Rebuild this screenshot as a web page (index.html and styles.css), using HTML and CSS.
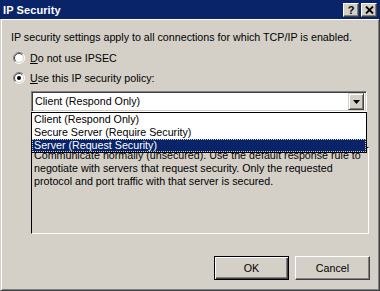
FILE: index.html
```html
<!DOCTYPE html>
<html>
<head>
<meta charset="utf-8">
<link rel="stylesheet" href="styles.css">
</head>
<body>
<div class="window">
  <div class="titlebar">
    <span class="title">IP Security</span>
    <div class="caption-btns">
      <span class="cbtn help">?</span>
      <span class="cbtn close"><svg width="9" height="8" viewBox="0 0 9 8"><path d="M1 0.5 L8 7.5 M8 0.5 L1 7.5" stroke="#000" stroke-width="1.8" fill="none"/></svg></span>
    </div>
  </div>
  <div class="body">
    <p class="intro">IP security settings apply to all connections for which TCP/IP is enabled.</p>
    <div class="radio">
      <svg class="radio-icon" width="12" height="12" viewBox="0 0 12 12">
        <circle cx="6" cy="6" r="5" fill="#fff"/>
        <path d="M2.1 9.9 A5.5 5.5 0 0 1 9.9 2.1" stroke="#808080" fill="none"/>
        <path d="M2.8 9.2 A4.5 4.5 0 0 1 9.2 2.8" stroke="#404040" fill="none"/>
        <path d="M9.9 2.1 A5.5 5.5 0 0 1 2.1 9.9" stroke="#fff" fill="none"/>
        <path d="M9.2 2.8 A4.5 4.5 0 0 1 2.8 9.2" stroke="#d4d0c8" fill="none"/>
      </svg>
      <span><u>D</u>o not use IPSEC</span>
    </div>
    <div class="radio">
      <svg class="radio-icon" width="12" height="12" viewBox="0 0 12 12">
        <circle cx="6" cy="6" r="5" fill="#fff"/>
        <path d="M2.1 9.9 A5.5 5.5 0 0 1 9.9 2.1" stroke="#808080" fill="none"/>
        <path d="M2.8 9.2 A4.5 4.5 0 0 1 9.2 2.8" stroke="#404040" fill="none"/>
        <path d="M9.9 2.1 A5.5 5.5 0 0 1 2.1 9.9" stroke="#fff" fill="none"/>
        <path d="M9.2 2.8 A4.5 4.5 0 0 1 2.8 9.2" stroke="#d4d0c8" fill="none"/>
        <circle cx="6" cy="6" r="2" fill="#000"/>
      </svg>
      <span><u>U</u>se this IP security policy:</span>
    </div>
    <div class="policy">
      <div class="combo">
        <span class="combo-value">Client (Respond Only)</span>
        <span class="combo-btn"><svg width="7" height="4" viewBox="0 0 7 4"><path d="M0 0 H7 L3.5 4 Z" fill="#000"/></svg></span>
      </div>
      <ul class="listbox">
        <li>Client (Respond Only)</li>
        <li>Secure Server (Require Security)</li>
        <li class="selected">Server (Request Security)</li>
      </ul>
      <div class="desc">Communicate normally (unsecured). Use the default response rule to<br>negotiate with servers that request security. Only the requested<br>protocol and port traffic with that server is secured.</div>
    </div>
    <div class="buttons">
      <button class="btn default">OK</button>
      <button class="btn">Cancel</button>
    </div>
  </div>
</div>
</body>
</html>
```

FILE: styles.css
```css
html, body {
  margin: 0;
  padding: 0;
  background: #d4d0c8;
}

.window {
  width: 380px;
  height: 291px;
  display: flex;
  flex-direction: column;
  font-family: "Liberation Sans", Arial, sans-serif;
  font-size: 10.7px;
  color: #000;
  background: #d4d0c8;
}

.titlebar {
  height: 19px;
  background: #0a246a;
  display: flex;
  align-items: center;
  justify-content: space-between;
  padding: 0 3px 0 3px;
  flex: none;
}

.title {
  color: #fff;
  font-weight: bold;
  font-size: 11px;
  letter-spacing: 0.1px;
}

.caption-btns {
  display: flex;
  gap: 2px;
  margin-top: 1px;
}

.cbtn {
  width: 16px;
  height: 14px;
  box-sizing: border-box;
  background: #d4d0c8;
  border-top: 1px solid #fff;
  border-left: 1px solid #fff;
  border-right: 1px solid #404040;
  border-bottom: 1px solid #404040;
  box-shadow: inset -1px -1px 0 #808080;
  display: flex;
  align-items: center;
  justify-content: center;
  font-weight: bold;
  font-size: 11px;
  line-height: 1;
}

.body {
  flex: 1;
  display: flex;
  flex-direction: column;
  padding: 12px 9px 0 10px;
  border-left: 1px solid #d4d0c8;
  border-right: 1px solid #404040;
  border-bottom: 1px solid #404040;
  box-shadow: inset 1px 1px 0 #fff, inset -1px -1px 0 #808080;
}

.intro {
  margin: 0;
  line-height: 13px;
  white-space: nowrap;
}

.radio {
  height: 20px;
  display: flex;
  align-items: center;
  gap: 5px;
  padding-left: 2px;
}

.radio:first-of-type {
  margin-top: 4px;
}

.radio-icon {
  display: block;
  flex: none;
}

.policy {
  position: relative;
  margin-left: 20px;
  margin-top: 3px;
  display: flex;
  flex-direction: column;
}

.combo {
  width: 336px;
  height: 21px;
  box-sizing: border-box;
  background: #fff;
  border-top: 1px solid #808080;
  border-left: 1px solid #808080;
  border-right: 1px solid #fff;
  border-bottom: 1px solid #fff;
  box-shadow: inset 1px 1px 0 #404040, inset -1px -1px 0 #d4d0c8;
  display: flex;
  align-items: center;
  justify-content: space-between;
  padding: 2px 2px 2px 3px;
}

.combo-value {
  line-height: 13px;
}

.combo-btn {
  width: 16px;
  height: 17px;
  box-sizing: border-box;
  background: #d4d0c8;
  border-top: 1px solid #d4d0c8;
  border-left: 1px solid #d4d0c8;
  border-right: 1px solid #404040;
  border-bottom: 1px solid #404040;
  box-shadow: inset 1px 1px 0 #fff, inset -1px -1px 0 #808080;
  display: flex;
  align-items: center;
  justify-content: center;
}

.combo-btn svg {
  display: block;
}

.listbox {
  position: absolute;
  top: 21px;
  left: 0;
  width: 336px;
  height: 41px;
  box-sizing: border-box;
  margin: 0;
  padding: 0;
  list-style: none;
  background: #fff;
  border: 1px solid #000;
  z-index: 2;
}

.listbox li {
  height: 13px;
  line-height: 13px;
  padding-left: 2px;
  white-space: nowrap;
}

.listbox li.selected {
  background: #0a246a;
  color: #fff;
  outline: 1px dotted #d4d0c8;
  outline-offset: -1px;
}

.desc {
  margin-top: 35px;
  width: 338px;
  height: 87px;
  box-sizing: border-box;
  border-top: 1px solid #000;
  border-left: 1px solid #000;
  border-right: 1px solid #fff;
  border-bottom: 1px solid #fff;
  padding: 1px 2px;
  line-height: 13px;
  white-space: nowrap;
}

.buttons {
  margin-top: 22px;
  display: flex;
  justify-content: flex-end;
  gap: 6px;
}

.btn {
  width: 75px;
  height: 24px;
  box-sizing: border-box;
  margin: 0;
  padding: 0;
  font-family: "Liberation Sans", Arial, sans-serif;
  font-size: 10.7px;
  color: #000;
  background: #d4d0c8;
  border-top: 1px solid #fff;
  border-left: 1px solid #fff;
  border-right: 1px solid #404040;
  border-bottom: 1px solid #404040;
  box-shadow: inset -1px -1px 0 #808080;
}

.btn.default {
  border: 1px solid #000;
  box-shadow: inset 1px 1px 0 #fff, inset -1px -1px 0 #404040, inset -2px -2px 0 #808080;
}
```
